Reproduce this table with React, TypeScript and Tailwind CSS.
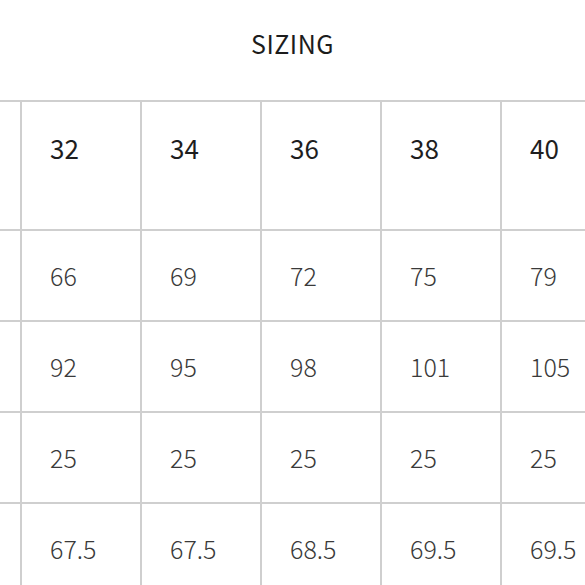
const sizes = ["32", "34", "36", "38", "40"];

const rows = [
  ["66", "69", "72", "75", "79"],
  ["92", "95", "98", "101", "105"],
  ["25", "25", "25", "25", "25"],
  ["67.5", "67.5", "68.5", "69.5", "69.5"],
];

export default function App() {
  return (
    <div
      className="w-[585px] h-[585px] overflow-hidden bg-white"
      style={{ fontFamily: '"Noto Sans CJK SC", "Noto Sans", sans-serif' }}
    >
      {/* Title */}
      <div className="h-[100px] flex items-center justify-center">
        <h1 className="text-[25px] font-normal text-[#1c1c1c] tracking-[0.5px] -mt-[12px]">SIZING</h1>
      </div>

      {/* Table */}
      <div className="border-t-2 border-[#cfcfcf] w-[700px]">
        {/* Header row */}
        <div className="flex h-[129px] border-b-2 border-[#cfcfcf]">
          <div className="w-[22px] shrink-0 border-r-2 border-[#cfcfcf]" />
          {sizes.map((s) => (
            <div
              key={s}
              className="w-[120px] shrink-0 border-r-2 border-[#cfcfcf] pl-[28px] pt-[28px] text-[26px] leading-[36px] text-[#1e1e1e]"
            >
              {s}
            </div>
          ))}
        </div>

        {rows.map((r, i) => (
          <div key={i} className="flex h-[91px] border-b-2 border-[#cfcfcf]">
            <div className="w-[22px] shrink-0 border-r-2 border-[#cfcfcf]" />
            {r.map((v, j) => (
              <div
                key={j}
                className="w-[120px] shrink-0 border-r-2 border-[#cfcfcf] pl-[28px] flex items-center text-[25px] font-light text-[#3a3a3a]"
              >
                {v}
              </div>
            ))}
          </div>
        ))}
      </div>
    </div>
  );
}
